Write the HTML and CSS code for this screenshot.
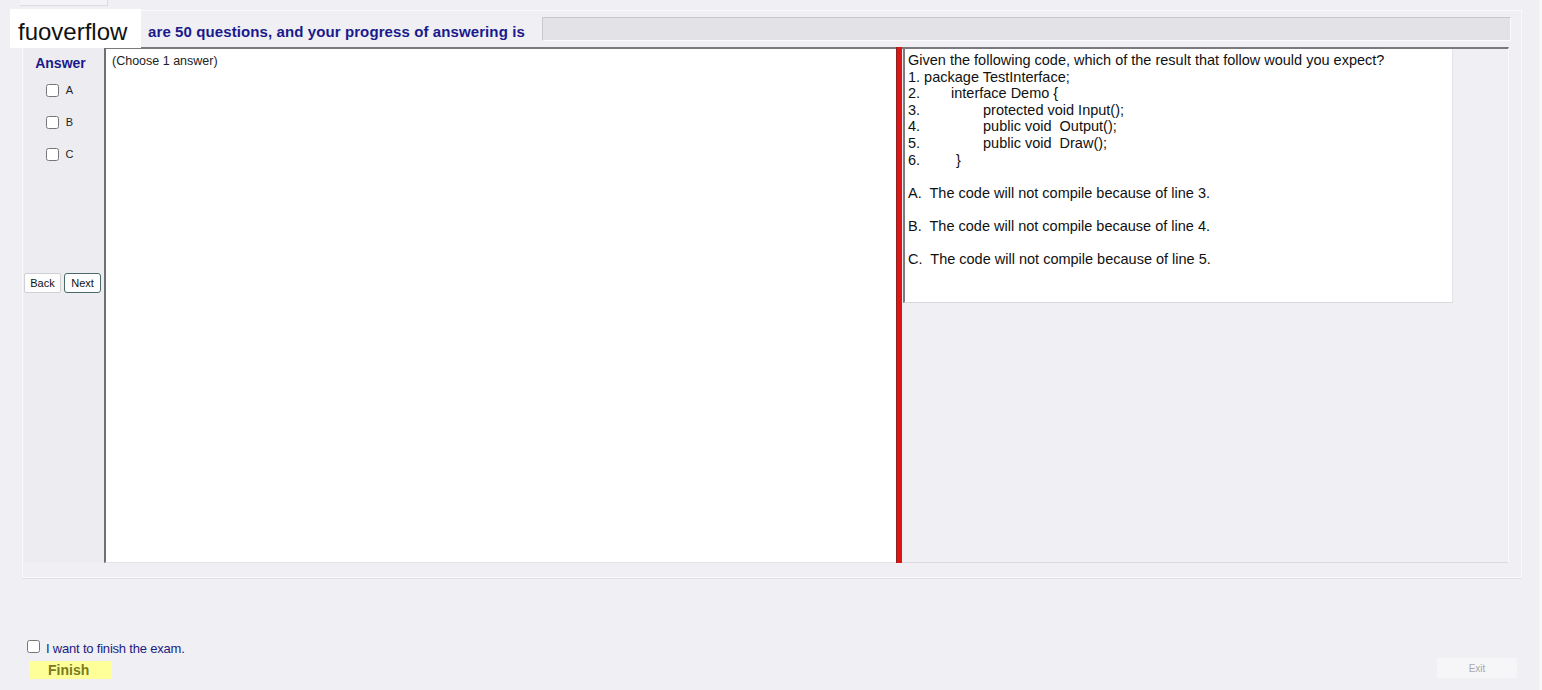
FILE: index.html
```html
<!DOCTYPE html>
<html lang="en">

<head>
    <meta charset="UTF-8">
    <meta name="viewport" content="width=device-width, initial-scale=1.0">
    <title>Exam</title>
    <link rel="stylesheet" href="styles.css">
</head>

<body>

    <div class="tabstrip">
        <div class="tab"></div>
    </div>

    <div class="logo">fuoverflow</div>

    <div class="frame">
        <div class="header">
            <p class="title">are 50 questions, and your progress of answering is</p>
            <div class="progress"></div>
        </div>

        <div class="main">
            <div class="sidebar">
                <p class="answer-label">Answer</p>
                <label class="option"><input type="checkbox"> A</label>
                <label class="option"><input type="checkbox"> B</label>
                <label class="option"><input type="checkbox"> C</label>
                <div class="nav">
                    <button class="btn">Back</button>
                    <button class="btn next">Next</button>
                </div>
            </div>

            <div class="answer-panel">
                <p>(Choose 1 answer)</p>
            </div>

            <div class="splitter"></div>

            <div class="question-panel">
                <div class="question">
                    <p>Given the following code, which of the result that follow would you expect?</p>
                    <p>1. package TestInterface;</p>
                    <p class="code"><span class="num">2.</span><span class="in1">interface Demo {</span></p>
                    <p class="code"><span class="num">3.</span><span class="in2">protected void Input();</span></p>
                    <p class="code"><span class="num">4.</span><span class="in2">public void&nbsp; Output();</span></p>
                    <p class="code"><span class="num">5.</span><span class="in2">public void&nbsp; Draw();</span></p>
                    <p class="code"><span class="num">6.</span><span class="in0">}</span></p>
                    <p class="choice">A.&nbsp; The code will not compile because of line 3.</p>
                    <p class="choice">B.&nbsp; The code will not compile because of line 4.</p>
                    <p class="choice">C.&nbsp; The code will not compile because of line 5.</p>
                </div>
            </div>
        </div>
    </div>

    <div class="footer">
        <div class="finish-box">
            <label class="finish-check"><input type="checkbox"> I want to finish the exam.</label>
            <div class="finish">Finish</div>
        </div>
        <button class="exit">Exit</button>
    </div>

</body>

</html>
```

FILE: styles.css
```css
* {
    margin: 0;
    padding: 0;
    box-sizing: border-box;
}

body {
    font-family: "Liberation Sans", Arial, sans-serif;
    background-color: #efeff4;
    width: 1542px;
    height: 690px;
    overflow: hidden;
    border-right: 3px solid #f7f7f9;
}

.tabstrip {
    height: 6px;
    padding-left: 20px;
}

.tab {
    width: 88px;
    height: 6px;
    border-right: 1px solid #dcdce0;
    border-bottom: 1px solid #dcdce0;
    background-color: #f4f4f6;
}

.logo {
    position: absolute;
    left: 10px;
    top: 9px;
    width: 131px;
    height: 39px;
    background-color: white;
    font-size: 24px;
    line-height: 39px;
    padding-top: 3px;
    padding-left: 8px;
    color: #111;
}

.frame {
    margin-left: 22px;
    margin-top: 4px;
    width: 1500px;
    height: 568px;
    border: 1px solid #fafafc;
    box-shadow: 0 1px 0 #dedee3;
    padding-left: 1px;
}

.header {
    display: flex;
    align-items: center;
    height: 24px;
    margin-top: 6px;
}

.title {
    padding-left: 124px;
    font-size: 15px;
    font-weight: bold;
    color: #1a1a8c;
    width: 518px;
    white-space: nowrap;
    letter-spacing: 0.1px;
    padding-top: 5px;
}

.progress {
    width: 969px;
    height: 24px;
    background-color: #e3e3e7;
    border: 1px solid #c9c9cd;
    border-right-color: #fbfbfb;
    border-bottom-color: #fbfbfb;
}

.main {
    display: flex;
    margin-top: 6px;
    height: 516px;
}

.sidebar {
    width: 80px;
    display: flex;
    flex-direction: column;
    align-items: center;
    background-color: #ededf1;
}

.answer-label {
    font-size: 14px;
    font-weight: bold;
    color: #1a1a8c;
    margin-top: 8px;
    margin-bottom: 3px;
    margin-left: -7px;
}

.option {
    display: flex;
    align-items: center;
    gap: 7px;
    font-size: 11px;
    color: #222;
    height: 32px;
    margin-left: -9px;
}

.option input,
.finish-check input {
    width: 13px;
    height: 13px;
    margin: 0;
}

.nav {
    display: flex;
    gap: 3px;
    margin-top: 103px;
    align-self: flex-start;
}

.btn {
    width: 37px;
    height: 20px;
    font-family: "Liberation Sans", Arial, sans-serif;
    font-size: 11px;
    background-color: #fdfdfd;
    border: 1px solid #d0d0d4;
    border-radius: 2px;
    color: #111;
}

.btn.next {
    border-color: #4a6a6a;
    border-radius: 3px;
}

.answer-panel {
    width: 792px;
    background-color: white;
    border-top: 2px solid #7a7a7e;
    border-left: 2px solid #707074;
    border-bottom: 1px solid #e2e2e6;
    padding: 5px 6px;
    font-size: 12.5px;
    color: #222;
}

.splitter {
    width: 6px;
    background-color: #dd1515;
    border-left: 1px solid #8a2020;
}

.question-panel {
    width: 607px;
    border-top: 2px solid #7a7a7e;
    border-right: 1px solid #fafafc;
    border-bottom: 1px solid #dcdce0;
    padding-left: 1px;
}

.question {
    width: 550px;
    height: 254px;
    background-color: white;
    border-left: 2px solid #7c7c80;
    border-bottom: 1px solid #d8d8dc;
    border-right: 1px solid #e4e4e8;
    padding: 3px 3px;
    font-size: 14.5px;
    line-height: 16.6px;
    color: #111;
}

.code {
    display: flex;
}

.num {
    width: 20px;
}

.in0 {
    margin-left: 28px;
}

.in1 {
    margin-left: 23px;
}

.in2 {
    margin-left: 55px;
}

.choice {
    margin-top: 16.6px;
}

.choice:first-of-type {
    margin-top: 16px;
}

.footer {
    display: flex;
    justify-content: space-between;
    align-items: flex-end;
    margin-top: 62px;
    padding-left: 27px;
    padding-right: 22px;
}

.finish-box {
    display: flex;
    flex-direction: column;
}

.finish-check {
    display: flex;
    align-items: center;
    gap: 6px;
    font-size: 13px;
    color: #1c1c80;
    letter-spacing: -0.2px;
}

.finish-check input {
    margin-bottom: 4px;
}

.finish {
    margin-top: 4px;
    margin-left: 3px;
    width: 82px;
    height: 18px;
    background-color: #ffff99;
    color: #7a7a20;
    font-weight: bold;
    font-size: 14px;
    line-height: 18px;
    padding-left: 18px;
}

.exit {
    width: 80px;
    height: 20px;
    background-color: #f6f6f8;
    border: none;
    color: #a8a8ac;
    font-family: "Liberation Sans", Arial, sans-serif;
    font-size: 10px;
    margin-bottom: 1px;
}
```
